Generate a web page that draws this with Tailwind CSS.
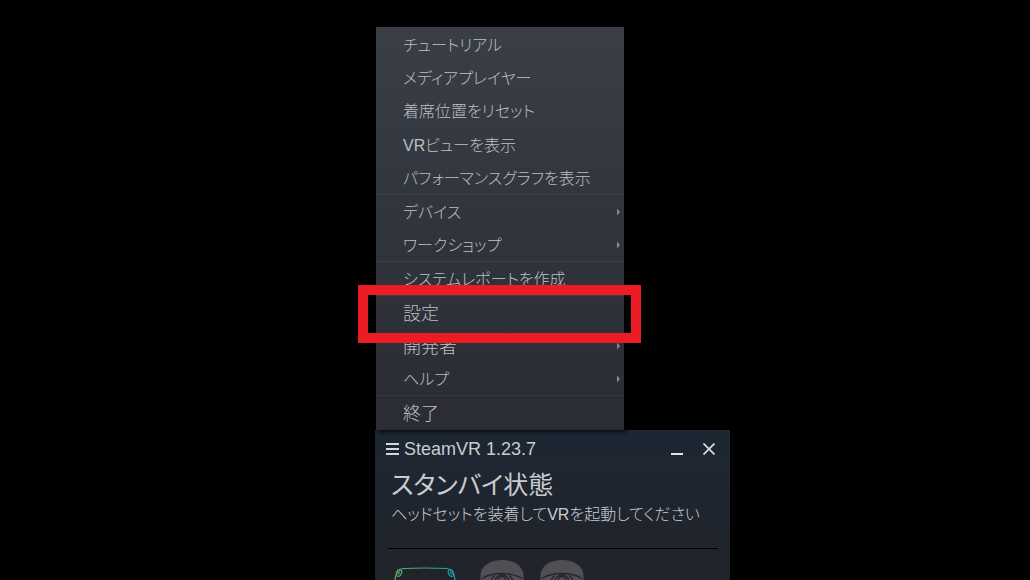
<!DOCTYPE html>
<html lang="ja">
<head>
<meta charset="utf-8">
<meta name="viewport" content="width=device-width, initial-scale=1">
<title>SteamVR</title>
<script src="https://cdn.jsdelivr.net/npm/@tailwindcss/browser@4"></script>
</head>
<body class="bg-black">
<main class="flex h-screen flex-col overflow-hidden pt-[27px] pl-[375px] font-['Liberation_Sans','Noto_Sans_CJK_JP',sans-serif] font-light text-[#bcbfc3] [font-feature-settings:'palt']">
  <nav aria-label="SteamVR メニュー" class="relative z-10 ml-px w-[248px] shrink-0 bg-linear-to-b from-[#3a3e47] via-[#30343b] to-[#2b2c34] pt-px text-base shadow-[2px_2px_4px_rgba(0,0,0,0.7)]">
    <ul class="border-b border-[#373b42]">
      <li><button class="flex h-[33px] w-full items-center pt-[3px] pl-[27px]">チュートリアル</button></li>
      <li><button class="flex h-[33px] w-full items-center pt-[3px] pl-[27px]">メディアプレイヤー</button></li>
      <li><button class="flex h-[33px] w-full items-center pt-[3px] pl-[27px]">着席位置をリセット</button></li>
    </ul>
    <ul class="border-b border-[#3d4147]">
      <li><button class="flex h-[33px] w-full items-center pt-[3px] pl-[27px]">VRビューを表示</button></li>
      <li><button class="flex h-[33px] w-full items-center pt-[3px] pl-[27px]">パフォーマンスグラフを表示</button></li>
    </ul>
    <ul class="border-b border-[#3d4147]">
      <li><button class="flex h-[33px] w-full items-center justify-between pt-[3px] pr-1 pl-[27px]">デバイス<svg class="mb-[3px] h-[6px] w-[3px] fill-[#858a90]" viewBox="0 0 3 6" aria-hidden="true"><path d="M0 0h.5L3 3 .5 6H0z"/></svg></button></li>
      <li><button class="flex h-[33px] w-full items-center justify-between pt-[3px] pr-1 pl-[27px]">ワークショップ<svg class="mb-[3px] h-[6px] w-[3px] fill-[#858a90]" viewBox="0 0 3 6" aria-hidden="true"><path d="M0 0h.5L3 3 .5 6H0z"/></svg></button></li>
    </ul>
    <ul class="border-b border-[#3d4147]">
      <li><button class="flex h-[33px] w-full items-center pt-[3px] pl-[27px]">システムレポートを作成</button></li>
    </ul>
    <ul class="border-b border-[#34373e]">
      <li class="relative">
        <button class="flex h-[33px] w-full items-center pt-[3px] pl-[27px] text-lg">設定</button>
        <span class="pointer-events-none absolute -top-[11px] -right-[17px] -bottom-[14px] -left-[18px] z-20 border-10 border-[#ec1c24]"></span>
      </li>
      <li><button class="flex h-[33px] w-full items-center justify-between pt-[3px] pr-1 pl-[27px] text-lg">開発者<svg class="mb-[3px] h-[6px] w-[3px] fill-[#858a90]" viewBox="0 0 3 6" aria-hidden="true"><path d="M0 0h.5L3 3 .5 6H0z"/></svg></button></li>
      <li><button class="flex h-[33px] w-full items-center justify-between pt-[3px] pr-1 pl-[27px]">ヘルプ<svg class="mb-[3px] h-[6px] w-[3px] fill-[#858a90]" viewBox="0 0 3 6" aria-hidden="true"><path d="M0 0h.5L3 3 .5 6H0z"/></svg></button></li>
    </ul>
    <ul class="pb-px">
      <li><button class="flex h-[33px] w-full items-center pt-[3px] pl-[27px] text-lg">終了</button></li>
    </ul>
  </nav>

  <section class="w-[355px] flex-1 overflow-hidden border-l border-[#1b2530] bg-linear-to-b from-[#1c2733] via-[#1f252f] to-[#212328] text-[#c9cccf]">
    <header class="flex h-[38px] items-center pr-[15px] pl-[10px]">
      <button aria-label="メニュー"><svg class="h-3 w-[13px] fill-[#d5d8da]" viewBox="0 0 13 12"><path d="M0 0h13v2H0zM0 5h13v2H0zM0 10h13v2H0z"/></svg></button>
      <h1 class="pl-[5px] text-lg font-light">SteamVR 1.23.7</h1>
      <button class="ml-auto" aria-label="最小化"><svg class="h-3 w-3 fill-[#e2e4e6]" viewBox="0 0 12 12"><path d="M0 10h12v2H0z"/></svg></button>
      <button class="ml-5" aria-label="閉じる"><svg class="size-3 fill-none stroke-[#d9dbdd]" viewBox="0 0 12 12"><path stroke-width="1.700" d="M.5.5l11 11M11.500.5l-11 11"/></svg></button>
    </header>
    <div class="pl-[15px]">
      <h2 class="h-[34px] text-[25px] leading-[34px] font-normal">スタンバイ状態</h2>
      <p class="h-6 pt-px text-base leading-6 whitespace-nowrap">ヘッドセットを装着してVRを起動してください</p>
    </div>
    <div class="mt-[22px] mr-3 ml-3 border-t border-black pt-[11px]">
      <div class="flex items-start">
        <svg class="mt-[7px] ml-1.5 h-10 w-[62px] fill-none" viewBox="0 0 62 40" role="img" aria-label="ヘッドセット">
          <defs><linearGradient id="hmd" x1="0" x2="62" y1="0" y2="0" gradientUnits="userSpaceOnUse"><stop stop-color="#60ad6c"/><stop offset="1" stop-color="#149eae"/></linearGradient></defs>
          <g stroke="url(#hmd)" stroke-width="1.200">
            <path d="M1 34V12C2 6 4 2 9 1.500Q31 .5 53 1.500C58 2 60 6 61 12V34Q60 39 55 39H7Q2 39 1 34z"/>
            <ellipse cx="5" cy="6" rx="2.500" ry="3.500" transform="rotate(25 5 6)"/><path d="M4 7.500 6 4.500"/>
            <ellipse cx="57" cy="6" rx="2.500" ry="3.500" transform="rotate(-25 57 6)"/><path d="M58 7.500 56 4.500"/>
          </g>
        </svg>
        <svg class="ml-6 h-11 w-[44px]" viewBox="0 0 44 44" role="img" aria-label="ベースステーション 1">
          <path fill="#504f55" d="M.5 14C2 5 11 0 22 0s20 5 21.500 14v6q0 18-21.500 25Q.5 38 .5 20z"/>
          <path fill="none" stroke="#25262b" stroke-width="1.400" d="M2 18.500Q10 13.500 22 13.500t20 5M10 24q1-6 5-8.500M34 24q-1-6-5-8.500M15 25v-3a7 7 0 0 1 14 0v3"/><circle cx="22" cy="20" r="3.500" fill="none" stroke="#25262b" stroke-width="1.400"/>
        </svg>
        <svg class="ml-4 h-11 w-[44px]" viewBox="0 0 44 44" role="img" aria-label="ベースステーション 2">
          <path fill="#504f55" d="M.5 14C2 5 11 0 22 0s20 5 21.500 14v6q0 18-21.500 25Q.5 38 .5 20z"/>
          <path fill="none" stroke="#25262b" stroke-width="1.400" d="M2 18.500Q10 13.500 22 13.500t20 5M10 24q1-6 5-8.500M34 24q-1-6-5-8.500M15 25v-3a7 7 0 0 1 14 0v3"/><circle cx="22" cy="20" r="3.500" fill="none" stroke="#25262b" stroke-width="1.400"/>
        </svg>
      </div>
    </div>
  </section>
</main>
</body>
</html>
